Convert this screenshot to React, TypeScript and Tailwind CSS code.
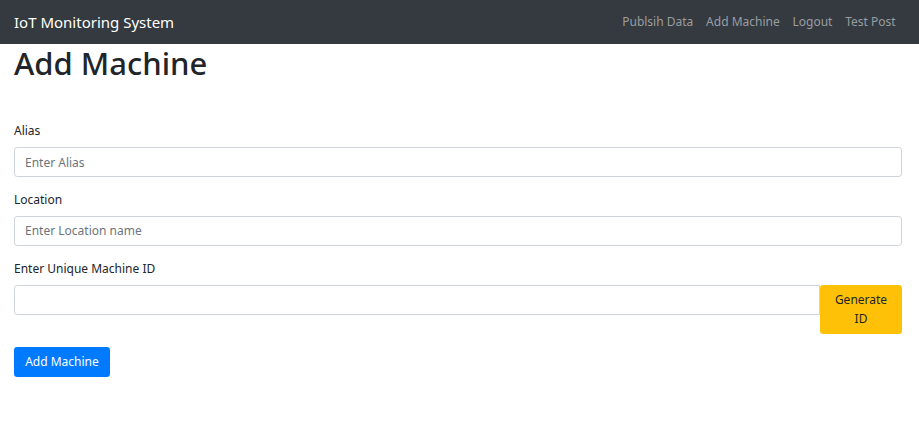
import { useState } from "react";

const links = ["Publsih Data", "Add Machine", "Logout", "Test Post"];

function Field({
  label,
  placeholder,
}: {
  label: string;
  placeholder: string;
}) {
  return (
    <div className="mb-[12.8px]">
      <label className="block mb-[6.4px] leading-[19.2px]">{label}</label>
      <input
        className="block w-full h-[30.4px] px-[10px] border border-[#ced4da] rounded-[3.2px] text-[#495057] placeholder:text-[#6c757d] outline-none"
        placeholder={placeholder}
      />
    </div>
  );
}

export default function App() {
  const [machineId, setMachineId] = useState("");

  return (
    <div
      className="min-h-screen bg-white text-[#212529] text-[12px]"
      style={{ fontFamily: '"Noto Sans", "Open Sans", sans-serif' }}
    >
      <nav className="h-[44px] bg-[#343a40] flex items-center justify-between pl-[14px] pr-[17px]">
        <a className="text-white text-[15px]">IoT Monitoring System</a>
        <ul className="flex">
          {links.map((l) => (
            <li key={l}>
              <a className="block px-[6.4px] text-[#9a9da0]">{l}</a>
            </li>
          ))}
        </ul>
      </nav>

      <div className="pl-[14px] pr-[17px]">
        <h1 className="text-[31px] leading-[38.4px] font-medium mb-[39px]">
          Add Machine
        </h1>

        <form onSubmit={(e) => e.preventDefault()}>
          <Field label="Alias" placeholder="Enter Alias" />
          <Field label="Location" placeholder="Enter Location name" />

          <div className="mb-[12.8px]">
            <label className="block mb-[6.4px] leading-[19.2px]">
              Enter Unique Machine ID
            </label>
            <div className="flex items-start">
              <input
                className="flex-1 h-[30.4px] px-[10px] border border-[#ced4da] rounded-l-[3.2px] outline-none"
                value={machineId}
                onChange={(e) => setMachineId(e.target.value)}
              />
              <button
                type="button"
                className="w-[82px] py-[5.6px] px-[9.6px] leading-[19.2px] bg-[#ffc107] text-[#212529] rounded-[3.2px]"
                onClick={() =>
                  setMachineId(Math.random().toString(36).slice(2, 10))
                }
              >
                Generate ID
              </button>
            </div>
          </div>

          <button
            type="submit"
            className="h-[30.4px] w-[96px] bg-[#007bff] text-white rounded-[3.2px]"
          >
            Add Machine
          </button>
        </form>
      </div>
    </div>
  );
}
